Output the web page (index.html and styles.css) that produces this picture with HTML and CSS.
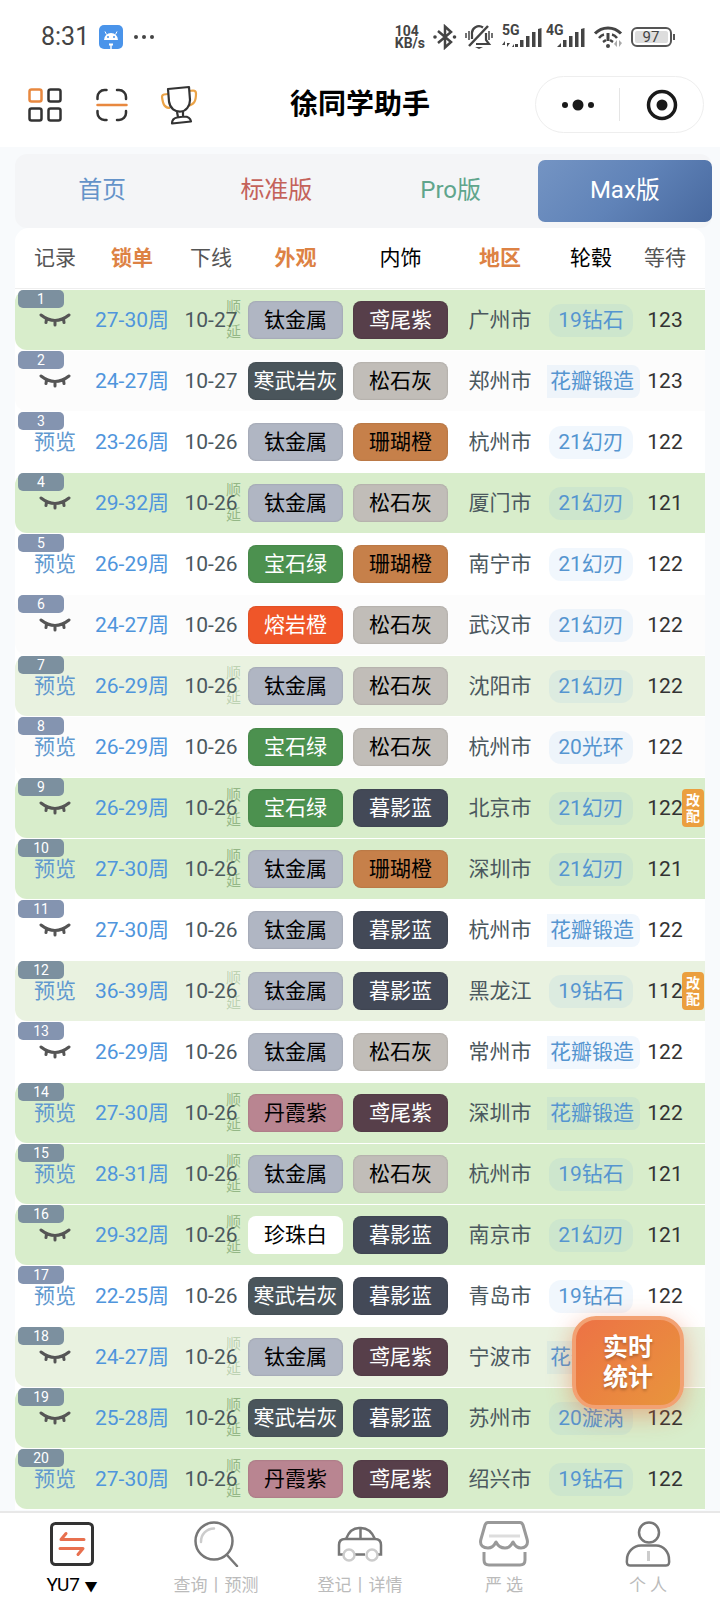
FILE: index.html
```html
<!DOCTYPE html>
<html lang="zh-CN">
<head>
    <meta charset="UTF-8">
    <meta name="viewport" content="width=device-width, initial-scale=1.0">
    <title>徐同学助手</title>
    <link rel="stylesheet" href="styles.css">
</head>
<body>
    <header class="header">
        <div class="status-bar">
            <div class="status-left">
                <span class="time">8:31</span>
                <svg width="24" height="24" viewBox="0 0 24 24">
                    <rect width="24" height="24" rx="5" fill="#4a94ea"/>
                    <path d="M5 15a7 7 0 0 1 14 0z" fill="#fff"/>
                    <path d="M7.5 9.500L6 6.500M16.500 9.500L18 6.500" stroke="#fff" stroke-width="1"/>
                    <circle cx="9" cy="12" r="1" fill="#4a94ea"/>
                    <circle cx="15" cy="12" r="1" fill="#4a94ea"/>
                    <path d="M10 18.500h4v2h-1.300V24h-1.400v-3.500H10z" fill="#fff"/>
                </svg>
                <svg width="22" height="6" viewBox="0 0 22 6" fill="#444">
                    <circle cx="3" cy="3" r="2"/><circle cx="11" cy="3" r="2"/><circle cx="19" cy="3" r="2"/>
                </svg>
            </div>
            <div class="status-right">
                <span class="speed">104<br>KB/s</span>
                <svg width="24" height="26" viewBox="0 0 24 26" fill="none" stroke="#444" stroke-width="2.500">
                    <path d="M5 7l13 11-6 5.500v-21L18 8 5 19"/>
                    <circle cx="2" cy="13" r="1.800" fill="#444" stroke="none"/>
                    <circle cx="21.500" cy="13" r="1.800" fill="#444" stroke="none"/>
                </svg>
                <svg width="28" height="26" viewBox="0 0 28 26" fill="none" stroke="#444" stroke-width="2.200">
                    <path d="M7 15V10a7 7 0 0 1 11-6.500M11 20h13l-3-4V9"/>
                    <path d="M23 2L4 22" stroke-width="2.500"/>
                    <path d="M10 23h8l-4 2z" fill="#444" stroke="none"/>
                    <path d="M1 9v5M4 7v9M24 7v9M27 9v5" stroke-width="1.500"/>
                </svg>
                <span class="signals">
                    <svg width="41" height="28" viewBox="0 -4 41 28" fill="#444">
                        <text class="net" x="1" y="10">5G</text>
                        <path d="M4 22v-6l-3 4h3zM6 16v6l3-4H6zM14 19h3v3h-3v-1zM19 15h3.500v7H19zM25 11h3.500v11H25zM31 7h3.500v15H31zM37 4l3.500-1v19H37zM11 22l2-3v3z"/>
                    </svg>
                    <svg width="39" height="28" viewBox="0 -4 39 28" fill="#444">
                        <text class="net" x="0" y="10">4G</text>
                        <path d="M11 22l4-4v4zM17 15h3.500v7H17zM23 11h3.500v11H23zM29 7h3.500v15H29zM35 4l3.500-1v19H35z"/>
                    </svg>
                </span>
                <svg width="30" height="24" viewBox="0 0 30 24" fill="none" stroke="#444" stroke-width="3">
                    <path d="M2 8.500C9 1 21 1 28 8.500"/>
                    <path d="M6 13c1.500-2 3-3 5-3.500M24 13c-1.500-2-3-3-5-3.500M10 17l3-2M20 17l-3-2" stroke-width="2.500"/>
                    <path d="M15 8v8" stroke-width="3"/>
                    <circle cx="15" cy="21" r="2" fill="#444" stroke="none"/>
                    <path d="M24 15v7l-3-3zM26 15v7l3-4z" fill="#aaa" stroke="none"/>
                </svg>
                <svg width="45" height="20" viewBox="0 0 45 20">
                    <rect x="1" y="1" width="39" height="18" rx="5" fill="#fff" stroke="#555" stroke-width="2"/>
                    <rect x="4" y="4" width="33" height="12" rx="2" fill="#ddd"/>
                    <path d="M42 7h2v6h-2z" fill="#555"/>
                    <text class="battery" x="20" y="15">97</text>
                </svg>
            </div>
        </div>
        <div class="title-bar">
            <div class="tools">
                <button class="tool" aria-label="菜单">
                    <svg width="34" height="34" viewBox="0 0 34 34" fill="none" stroke="#333" stroke-width="2.500">
                        <rect x="1.500" y="1.500" width="12" height="12" rx="2" stroke="#e8883f"/>
                        <rect x="20.500" y="1.500" width="12" height="12" rx="2"/>
                        <rect x="1.500" y="20.500" width="12" height="12" rx="2"/>
                        <rect x="20.500" y="20.500" width="12" height="12" rx="2"/>
                    </svg>
                </button>
                <button class="tool" aria-label="扫描">
                    <svg width="34" height="34" viewBox="0 0 34 34" fill="none" stroke="#333" stroke-width="2.500" stroke-linecap="round">
                        <path d="M2.500 11V9a7 7 0 0 1 7-7h2M22 2h2a7 7 0 0 1 7 7v2M31 23v2a7 7 0 0 1-7 7h-2M11.500 32h-2a7 7 0 0 1-7-7v-2"/>
                        <path d="M2.500 17h29" stroke="#e8883f"/>
                    </svg>
                </button>
                <button class="tool" aria-label="排行">
                    <svg width="38" height="40" viewBox="0 0 38 40" fill="none" stroke="#333" stroke-width="2.200" stroke-linejoin="round">
                        <path d="M8 9l-4 .5Q2 10 2 12c1 8 3 11 8 11M29 6l4-.5q3 0 3 3c0 8-2 11-8 12.500" stroke="#eba347"/>
                        <path d="M8 4l21-2 1 13c0 6-4 11-9 11.500-6 .5-11-3-12-10z" fill="#fff"/>
                        <path d="M17 27l1 5M23 26.500v5M12 38.500q0-5 5-6l7-1q6 0 7 5z"/>
                    </svg>
                </button>
            </div>
            <h1 class="title">徐同学助手</h1>
            <div class="capsule">
                <button class="capsule-btn" aria-label="更多">
                    <svg width="34" height="12" viewBox="0 0 34 12" fill="#1a1a1a">
                        <circle cx="4" cy="6" r="3"/><circle cx="17" cy="6" r="5.500"/><circle cx="30" cy="6" r="3"/>
                    </svg>
                </button>
                <button class="capsule-btn" aria-label="关闭">
                    <svg width="32" height="32" viewBox="0 0 32 32">
                        <circle cx="16" cy="16" r="13.500" fill="none" stroke="#1a1a1a" stroke-width="3.500"/>
                        <circle cx="16" cy="16" r="5.500" fill="#1a1a1a"/>
                    </svg>
                </button>
            </div>
        </div>
    </header>

    <main class="main">
        <div class="tabs">
            <button class="tab tab-home">首页</button>
            <button class="tab tab-std">标准版</button>
            <button class="tab tab-pro">Pro版</button>
            <button class="tab tab-max">Max版</button>
        </div>
        <table class="orders">
            <colgroup>
                <col class="col-record"><col class="col-lock"><col class="col-date">
                <col class="col-color"><col class="col-color"><col class="col-city">
                <col class="col-wheel"><col class="col-wait">
            </colgroup>
            <thead>
                <tr>
                    <th>记录</th>
                    <th class="sort">锁单</th>
                    <th class="date">下线</th>
                    <th class="sort">外观</th>
                    <th class="dark">内饰</th>
                    <th class="sort">地区</th>
                    <th class="dark">轮毂</th>
                    <th class="wait">等待</th>
                </tr>
            </thead>
            <tbody id="rows"></tbody>
        </table>
        <button class="float-btn">实时<br>统计</button>
    </main>

    <nav class="nav">
        <a class="nav-item active" href="#">
            <svg width="46" height="46" viewBox="0 0 46 46" fill="none" stroke="#333" stroke-width="3">
                <rect x="2.500" y="2.500" width="41" height="41" rx="4"/>
                <path d="M35 18.500H12l5-6M11 27.500h23l-5 6" stroke="#e8704f" stroke-linecap="round" stroke-linejoin="round"/>
            </svg>
            <span>YU7 <span class="arrow">▼</span></span>
        </a>
        <a class="nav-item" href="#">
            <svg width="46" height="46" viewBox="0 0 46 46" fill="none" stroke="#777" stroke-width="2.500" stroke-linecap="round">
                <circle cx="21" cy="20" r="18.500"/>
                <path d="M34 34l10 11"/>
                <path d="M8 21A13 13 0 0 1 21 7.500" stroke="#ccc"/>
            </svg>
            <span>查询丨预测</span>
        </a>
        <a class="nav-item" href="#">
            <svg width="46" height="46" viewBox="0 0 46 46" fill="none" stroke="#777" stroke-width="2.500">
                <path d="M6 33.500H2V24q0-6 6-6h30q6 0 6 6v9.500h-4M18 33.500h10M9 18C12 10 17 7 22 7h2c6 0 11 4 14 11M23.500 7v11"/>
                <circle cx="12" cy="34" r="5.500" stroke="#ccc"/>
                <circle cx="35" cy="34" r="5.500" stroke="#ccc"/>
            </svg>
            <span>登记丨详情</span>
        </a>
        <a class="nav-item" href="#">
            <svg width="50" height="46" viewBox="0 0 50 46" fill="none" stroke="#999" stroke-width="3" stroke-linejoin="round">
                <path d="M9 1.500h32q2 0 3 2.500l4 14c2 7-3 9-6 9-4 0-6-2-8-6-2 4-4 6-8 6s-7-2-9-6c-2 4-4 6-8 6-4 0-9-2-7-9L6 4q1-2.500 3-2.500z"/>
                <path d="M5 31v8q0 5 5 5h31q5 0 5-5v-8"/>
                <path d="M10 15h31" stroke="#ddd"/>
            </svg>
            <span>严 选</span>
        </a>
        <a class="nav-item" href="#">
            <svg width="46" height="46" viewBox="0 0 46 46" fill="none" stroke="#777" stroke-width="2.500">
                <circle cx="24" cy="11.500" r="10"/>
                <path d="M16 24.500h15c8 0 13 7 13 14q1 6-3 6H5q-4 0-3-6c0-7 6-14 14-14z"/>
                <path d="M23.500 30v10" stroke="#ccc" stroke-width="3"/>
            </svg>
            <span>个 人</span>
        </a>
    </nav>

    <script>
        // 颜色名称对应的样式
        const colors = {
            '钛金属': 'titanium', '寒武岩灰': 'basalt', '宝石绿': 'emerald', '熔岩橙': 'lava',
            '丹霞紫': 'danxia', '珍珠白': 'pearl', '鸢尾紫': 'iris', '松石灰': 'stone',
            '珊瑚橙': 'coral', '暮影蓝': 'dusk'
        };

        // 预览, 锁单, 下线, 外观, 内饰, 地区, 轮毂, 等待, 顺延(1 浅色 2 深色), 改配
        const orders = [
            [0, '27-30周', '10-27', '钛金属', '鸢尾紫', '广州市', '19钻石', 123, 2, 0],
            [0, '24-27周', '10-27', '寒武岩灰', '松石灰', '郑州市', '花瓣锻造', 123, 0, 0],
            [1, '23-26周', '10-26', '钛金属', '珊瑚橙', '杭州市', '21幻刃', 122, 0, 0],
            [0, '29-32周', '10-26', '钛金属', '松石灰', '厦门市', '21幻刃', 121, 2, 0],
            [1, '26-29周', '10-26', '宝石绿', '珊瑚橙', '南宁市', '21幻刃', 122, 0, 0],
            [0, '24-27周', '10-26', '熔岩橙', '松石灰', '武汉市', '21幻刃', 122, 0, 0],
            [1, '26-29周', '10-26', '钛金属', '松石灰', '沈阳市', '21幻刃', 122, 1, 0],
            [1, '26-29周', '10-26', '宝石绿', '松石灰', '杭州市', '20光环', 122, 0, 0],
            [0, '26-29周', '10-26', '宝石绿', '暮影蓝', '北京市', '21幻刃', 122, 2, 1],
            [1, '27-30周', '10-26', '钛金属', '珊瑚橙', '深圳市', '21幻刃', 121, 2, 0],
            [0, '27-30周', '10-26', '钛金属', '暮影蓝', '杭州市', '花瓣锻造', 122, 0, 0],
            [1, '36-39周', '10-26', '钛金属', '暮影蓝', '黑龙江', '19钻石', 112, 1, 1],
            [0, '26-29周', '10-26', '钛金属', '松石灰', '常州市', '花瓣锻造', 122, 0, 0],
            [1, '27-30周', '10-26', '丹霞紫', '鸢尾紫', '深圳市', '花瓣锻造', 122, 2, 0],
            [1, '28-31周', '10-26', '钛金属', '松石灰', '杭州市', '19钻石', 121, 2, 0],
            [0, '29-32周', '10-26', '珍珠白', '暮影蓝', '南京市', '21幻刃', 121, 2, 0],
            [1, '22-25周', '10-26', '寒武岩灰', '暮影蓝', '青岛市', '19钻石', 122, 0, 0],
            [0, '24-27周', '10-26', '钛金属', '鸢尾紫', '宁波市', '花瓣锻造', 122, 1, 0],
            [0, '25-28周', '10-26', '寒武岩灰', '暮影蓝', '苏州市', '20漩涡', 122, 2, 0],
            [1, '27-30周', '10-26', '丹霞紫', '鸢尾紫', '绍兴市', '19钻石', 122, 2, 0]
        ];

        const eye = `<svg width="32" height="14" viewBox="0 0 32 14" fill="none" stroke="#555" stroke-width="3" stroke-linecap="round">
            <path d="M2 2q14 11 28 0M7.500 6l-.5 3.500M16 8v4M24.500 6l.5 3.500"/></svg>`;

        document.getElementById('rows').innerHTML = orders.map((o, i) => `
            <tr class="${['', 'late-light', 'late'][o[8]]}">
                <td class="record"><span class="num">${i + 1}</span>
                    <button class="preview" aria-label="预览">${o[0] ? '预览' : eye}</button></td>
                <td class="lock">${o[1]}</td>
                <td class="date">${o[2]}${o[8] ? '<span class="delay">顺<br>延</span>' : ''}</td>
                <td><span class="chip ${colors[o[3]]}">${o[3]}</span></td>
                <td><span class="chip ${colors[o[4]]}">${o[4]}</span></td>
                <td class="city">${o[5]}</td>
                <td><span class="wheel ${o[6] === '花瓣锻造' ? 'wheel-wide' : ''}">${o[6]}</span></td>
                <td class="wait">${o[7]}${o[9] ? '<span class="changed">改<br>配</span>' : ''}</td>
            </tr>`).join('');
    </script>
</body>
</html>
```
FILE: styles.css
```css
* {
    box-sizing: border-box;
}
body {
    margin: 0;
    height: 100vh;
    display: flex;
    flex-direction: column;
    font-family: Roboto, "Noto Sans CJK SC", sans-serif;
    font-size: 21px;
    line-height: 30px;
    color: #333;
    background-color: #f8fafc;
}
button {
    border: 0;
    padding: 0;
    background: none;
    font: inherit;
    color: inherit;
}
svg {
    display: block;
}

/* 顶部 */
.header {
    background-color: #fff;
}
.status-bar {
    display: flex;
    justify-content: space-between;
    align-items: center;
    height: 63px;
    padding: 10px 44px 0 41px;
}
.status-left {
    display: flex;
    align-items: center;
    gap: 10px;
}
.status-right {
    display: flex;
    align-items: center;
    gap: 8px;
}
.signals {
    display: flex;
    gap: 4px;
    padding-bottom: 4px;
}
.time {
    font-size: 25px;
    color: #444;
}
.speed {
    font-size: 14px;
    font-weight: bold;
    line-height: 12px;
    color: #444;
}
.net {
    font-size: 14px;
    font-weight: bold;
}
.battery {
    font-size: 15px;
    fill: #444;
    text-anchor: middle;
}
.title-bar {
    display: grid;
    grid-template-columns: 1fr auto 1fr;
    align-items: center;
    height: 84px;
    padding: 0 16px 1px;
}
.tools {
    display: flex;
    gap: 10px;
}
.tool {
    width: 57px;
    display: flex;
    justify-content: center;
    align-items: center;
}
.title {
    margin: 0;
    font-size: 28px;
    font-weight: bold;
    color: #000;
}
.capsule {
    justify-self: end;
    display: flex;
    align-items: center;
    width: 169px;
    height: 57px;
    border: 1px solid #eee;
    border-radius: 29px;
}
.capsule-btn {
    flex: 1;
    height: 33px;
    display: flex;
    justify-content: center;
    align-items: center;
}
.capsule-btn + .capsule-btn {
    border-left: 1px solid #e5e5e5;
}

/* 版本切换 */
.main {
    flex: 1;
    min-height: 0;
    overflow: hidden;
    position: relative;
    padding: 7px 8px 0 15px;
}
.tabs {
    display: flex;
    padding: 6px 0;
    background-color: #f4f5f7;
    border-radius: 12px;
}
.tab {
    flex: 1;
    height: 62px;
    padding-bottom: 2px;
    border-radius: 7px;
    font-size: 24px;
}
.tab-home {
    color: #6493c9;
}
.tab-std {
    color: #c4625a;
}
.tab-pro {
    color: #5fa58c;
}
.tab-max {
    color: #fff;
    background: linear-gradient(135deg, #7494c3, #6083b8 50%, #48699f);
}

/* 订单列表 */
.orders {
    width: calc(100% - 7px);
    table-layout: fixed;
    border-spacing: 0 1px;
    background-color: #fff;
    border-radius: 14px 14px 0 0;
    text-align: center;
    white-space: nowrap;
}
.col-record { width: 80px; }
.col-lock { width: 74px; }
.col-date { width: 74px; }
.col-color { width: 105px; }
.col-city { width: 94px; }
.col-wheel { width: 88px; }
.col-wait { width: 70px; }
th {
    height: 60px;
    padding: 0 0 2px;
    font-weight: normal;
    color: #555;
    border-bottom: 1px solid #eee;
}
th.sort {
    font-weight: bold;
    color: #dd8244;
}
th.dark {
    color: #000;
}
td {
    position: relative;
    height: 60px;
    padding: 0;
}
tbody tr:nth-child(even) td {
    background-color: #fcfcfc;
}
tbody tr.late td {
    background-color: #d8edcb;
}
tbody tr.late-light td {
    background-color: #e9f2e0;
}
td.record {
    border-radius: 12px 0 0 12px;
}
.num {
    position: absolute;
    top: 0;
    left: 3px;
    width: 46px;
    height: 18px;
    border-radius: 5px;
    font-size: 14px;
    line-height: 18px;
    color: #fff;
    background-color: #8494b0;
}
.late .num,
.late-light .num {
    background-color: #7c909f;
}
.preview {
    color: #6199cf;
}
.preview svg {
    margin: 0 auto;
}
.lock {
    color: #4f95dc;
}
.date {
    padding-left: 10px;
}
td.date,
.city {
    color: #4b585e;
}
.wait {
    padding-right: 10px;
}
.delay {
    position: absolute;
    top: 5px;
    right: 2px;
    font-size: 15px;
    line-height: 25px;
    color: rgba(80, 130, 65, 0.5);
}
.late-light .delay {
    color: rgba(80, 130, 65, 0.3);
}
.chip {
    display: block;
    height: 38px;
    margin: 0 5px;
    border-radius: 8px;
    line-height: 38px;
    color: #fff;
    box-shadow: inset 0 0 2px rgba(0, 0, 0, 0.2);
}
.titanium { color: #000; background-color: #b0b6c3; }
.basalt { background-color: #4a555b; }
.emerald { background-color: #4c914f; }
.lava { background-color: #ef5629; }
.danxia { color: #000; background-color: #b98591; }
.pearl { color: #000; background-color: #fff; box-shadow: none; }
.iris { background-color: #573f4a; }
.stone { color: #000; background-color: #c1bdb8; }
.coral { color: #000; background-color: #c6804a; }
.dusk { background-color: #434957; }
.wheel {
    position: relative;
    z-index: 1;
    display: inline-block;
    height: 33px;
    padding: 0 9px;
    border-radius: 12px;
    line-height: 33px;
    color: #5595d0;
    background-color: rgba(74, 158, 226, 0.08);
    vertical-align: middle;
}
.wheel-wide {
    padding: 0 6px 0 3px;
    border-radius: 0 8px 8px 0;
}
.changed {
    position: absolute;
    top: 11px;
    right: 1px;
    width: 22px;
    padding: 3px 0;
    border-radius: 4px;
    font-size: 14px;
    font-weight: bold;
    line-height: 16px;
    color: #fff;
    background-color: #eb9f3f;
}
.float-btn {
    position: absolute;
    z-index: 2;
    right: 36px;
    bottom: 102px;
    width: 112px;
    height: 93px;
    border: 4px solid #f2a173;
    border-radius: 24px;
    font-size: 25px;
    font-weight: bold;
    line-height: 30px;
    color: #fff;
    text-shadow: 0 2px 3px rgba(0, 0, 0, 0.25);
    background: linear-gradient(135deg, #ed7245, #e8953c);
    box-shadow: 0 6px 24px rgba(235, 100, 50, 0.45);
}

/* 底部导航 */
.nav {
    display: flex;
    height: 89px;
    padding-top: 8px;
    border-top: 2px solid #e8e8e8;
    background-color: #fff;
}
.nav-item {
    flex: 1;
    display: flex;
    flex-direction: column;
    align-items: center;
    gap: 6px;
    font-size: 17px;
    line-height: 24px;
    color: #bbb;
    text-decoration: none;
}
.nav-item.active {
    font-size: 19px;
    color: #000;
}
.arrow {
    font-size: 13px;
}
```
